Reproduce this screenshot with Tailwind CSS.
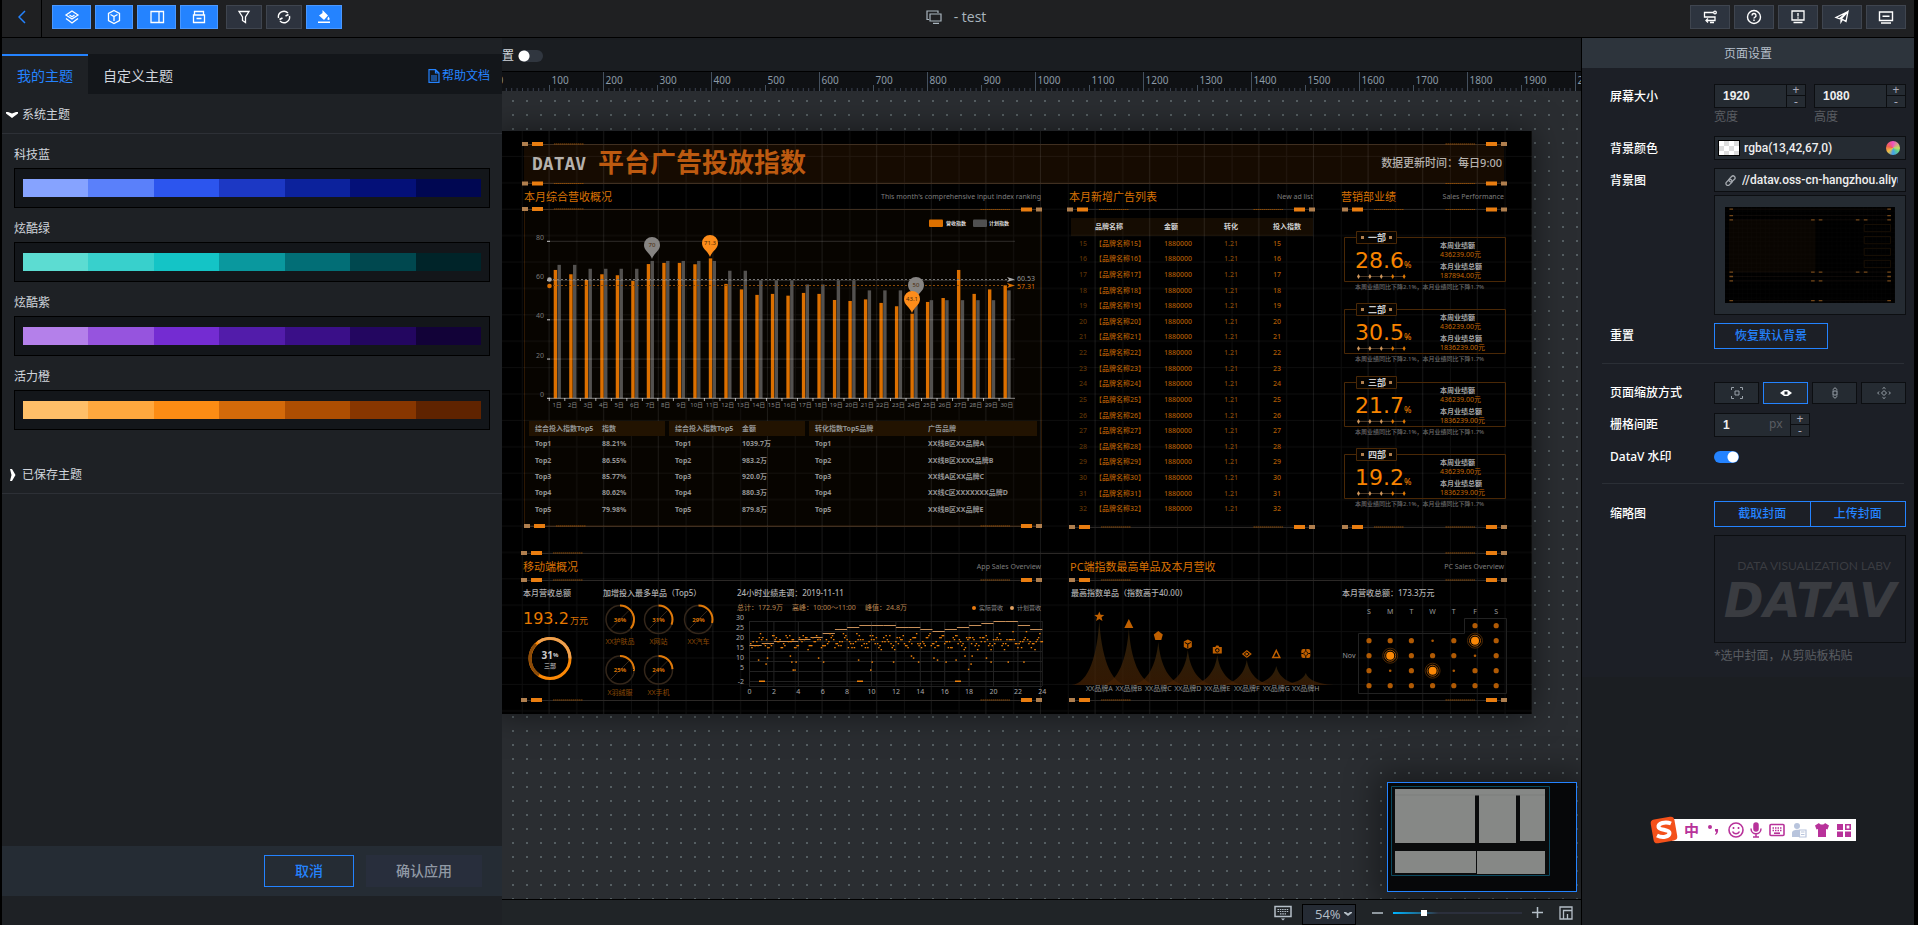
<!DOCTYPE html>
<html lang="zh-CN" class="h-full">
<head>
  <meta charset="UTF-8" />
  <meta name="viewport" content="width=device-width, initial-scale=1.0" />
  <title>DataV - test</title>
  <script src="https://cdn.jsdelivr.net/npm/@tailwindcss/browser@4"></script>
</head>
<body class="h-full bg-black font-['Noto_Sans','Noto_Sans_CJK_SC',sans-serif] text-xs text-[#d0d5dc]">
  <div class="flex h-screen flex-col overflow-hidden pr-1 pl-0.5">

    <!-- Top bar -->
    <header class="flex h-[38px] shrink-0 items-center justify-between border-b border-black bg-[#1f2022]">
      <div class="flex h-full flex-1 items-center">
        <button aria-label="返回" class="flex h-full w-10 items-center justify-center border-r border-black pb-1 text-[#2483ff]">
          <svg class="h-3.5 w-2" viewBox="0 0 8 14" fill="none" stroke="currentColor" stroke-width="1.5"><path d="M7 1 1 7l6 6" /></svg>
        </button>
        <div class="ml-2.5 flex gap-1 pb-1 text-white">
          <button aria-label="图层" class="flex h-6 w-[39px] items-center justify-center border border-[#4a98ff] bg-[#2483ff]">
            <svg class="size-4" viewBox="0 0 16 16" fill="none" stroke="currentColor" stroke-width="1.300"><path d="m8 2 6 4-6 4-6-4z" /><path d="m2 9.500 6 4.500 6-4.500M5.500 6 8 7.800 10.500 6" /></svg>
          </button>
          <button aria-label="组件" class="flex h-6 w-[38px] items-center justify-center border border-[#4a98ff] bg-[#2483ff]">
            <svg class="size-4" viewBox="0 0 16 16" fill="none" stroke="currentColor" stroke-width="1.300"><path d="m8 1.500 5.500 3v7L8 14.500l-5.500-3v-7z" /><path d="m4.500 5.500 3.500 2 3.500-2M8 7.500V12" /></svg>
          </button>
          <button aria-label="右侧面板" class="flex h-6 w-[39px] items-center justify-center border border-[#4a98ff] bg-[#2483ff]">
            <svg class="size-4" viewBox="0 0 16 16" fill="none" stroke="currentColor" stroke-width="1.300"><path d="M2 2.500h12.500v11H2zM10 2.500v11" /></svg>
          </button>
          <button aria-label="工具栏" class="flex h-6 w-[38px] items-center justify-center border border-[#4a98ff] bg-[#2483ff]">
            <svg class="size-4" viewBox="0 0 16 16" fill="none" stroke="currentColor" stroke-width="1.300"><path d="M2.500 6h11v7.500h-11zM3.500 6V2.500h9V6M5.500 9.500h5" /></svg>
          </button>
          <button aria-label="过滤器" class="ml-1 flex h-6 w-9 items-center justify-center border border-[#3f454f] bg-[#2d333e]">
            <svg class="size-4" viewBox="0 0 16 16" fill="none" stroke="currentColor" stroke-width="1.300"><path d="M3 2.500h10L9.500 8v5.500l-3-2V8z" /></svg>
          </button>
          <button aria-label="刷新" class="flex h-6 w-9 items-center justify-center border border-[#3f454f] bg-[#2d333e]">
            <svg class="size-4" viewBox="0 0 16 16" fill="none" stroke="currentColor" stroke-width="1.400"><path d="M2.500 9A5.600 5.600 0 0 1 12 4M13.500 7A5.600 5.600 0 0 1 4 12" /><path d="M12.500 5.500 9.500 7M3.500 10.500l3-1.500" /></svg>
          </button>
          <button aria-label="主题" class="flex h-6 w-9 items-center justify-center border border-[#4a98ff] bg-[#2483ff]">
            <svg class="size-4" viewBox="0 0 16 16" fill="currentColor"><path d="m6.500 1 5.500 5.500-4 4.500L3 6.500 6.500 4zM12.500 7.500c1.500 2 1.500 3.500 0 3.500s-1.500-1.500 0-3.500zM2 12.500h12V14H2z" /></svg>
          </button>
        </div>
      </div>

      <div class="flex items-center gap-3 pb-1 pl-1 text-[#a9b5be]">
        <svg class="h-3.5 w-4" viewBox="0 0 16 14" fill="none" stroke="currentColor" stroke-width="1.200"><path d="M3 9.500H1V1h11v2M4 4h11v7H4zM7 13.300h6" /></svg>
        <h1 class="font-['Open_Sans','Noto_Sans_CJK_SC',sans-serif] text-sm">- test</h1>
      </div>

      <div class="flex flex-1 justify-end gap-1 pr-2 pb-1 text-white">
        <button aria-label="数据" class="flex h-6 w-10 items-center justify-center border border-[#3f454f] bg-[#2d343f]">
          <svg class="size-4" viewBox="0 0 16 16" fill="none" stroke="currentColor" stroke-width="1.300"><path d="M11.500 3.500H2.500v4.500h3M5 8h8v3.500H5M8 13.500h4" /><circle cx="13" cy="3.500" r="1.300" /><path d="m6 9.500-2 2 2 2" /></svg>
        </button>
        <button aria-label="帮助" class="flex h-6 w-10 items-center justify-center border border-[#3f454f] bg-[#2d343f]">
          <svg class="size-4" viewBox="0 0 16 16" fill="none" stroke="currentColor" stroke-width="1.400"><circle cx="8" cy="8" r="6.500" /><path d="M6 6.500a2 2 0 1 1 2.800 1.800c-.6.3-.8.600-.8 1.200M8 10.500V12" /></svg>
        </button>
        <button aria-label="提示" class="flex h-6 w-10 items-center justify-center border border-[#3f454f] bg-[#2d343f]">
          <svg class="size-4" viewBox="0 0 16 16" fill="none" stroke="currentColor" stroke-width="1.300"><path d="M2 2h12v9H2zM3.500 13.500h9M8 4v3.500M8 8.300v1.400" /></svg>
        </button>
        <button aria-label="发布" class="flex h-6 w-10 items-center justify-center border border-[#3f454f] bg-[#2d343f]">
          <svg class="size-4" viewBox="0 0 16 16" fill="none" stroke="currentColor" stroke-width="1.300"><path d="M14 2.500 2 8.500l3.500 1.300L14 2.500l-2 10-3.500-2L7 13V10z" /></svg>
        </button>
        <button aria-label="预览" class="flex h-6 w-10 items-center justify-center border border-[#3f454f] bg-[#2d343f]">
          <svg class="size-4" viewBox="0 0 16 16" fill="none" stroke="currentColor" stroke-width="1.400"><path d="M1.500 3h13v8.500h-13zM4.500 7.300h7M3 14h10" /></svg>
        </button>
      </div>
    </header>

    <div class="flex min-h-0 flex-1">

      <!-- Theme panel -->
      <aside class="flex w-[500px] shrink-0 flex-col bg-[#1e2125] pt-4">
        <div class="flex h-10 shrink-0 items-center justify-between bg-[#13161a] pr-3">
          <div class="flex h-full text-sm">
            <button class="w-[86px] border-t-2 border-[#2483ff] bg-[#1e2125] pt-0.5 text-[#2483ff]">我的主题</button>
            <button class="w-[100px] pt-1">自定义主题</button>
          </div>
          <a href="#" class="flex items-center gap-0.5 pt-1 text-[#2483ff]">
            <svg class="h-3.5 w-3" viewBox="0 0 12 14" fill="none" stroke="currentColor" stroke-width="1.200"><path d="M7.500.700H1v12.600h10V4zM7.500.700V4H11M3 7h6M3 9h6M3 11h6" /></svg>
            帮助文档
          </a>
        </div>
        <button class="flex h-10 shrink-0 items-center gap-1 border-b border-[#2d3036] pt-0.5 pl-1">
          <svg class="h-1.5 w-3" viewBox="0 0 12 6" fill="#fff"><path d="M0 0h2l4 1.500L10 0h2v1.500L6 6 0 1.500z" /></svg>
          系统主题
        </button>
        <div id="themes" class="px-3 pt-3"></div>
        <button class="mt-3.5 flex h-[38px] shrink-0 items-center gap-1 border-b border-[#2d3036] pl-1.5">
          <svg class="h-3 w-2.5" viewBox="0 0 10 12" fill="#fff"><path d="M2 0h2l3.500 6L4 12H2l1.500-6z" /></svg>
          已保存主题
        </button>
        <div class="mt-auto mb-[29px] flex h-[50px] shrink-0 items-center justify-end gap-3 bg-[#252c34] pr-5 text-sm font-medium">
          <button class="h-8 w-[90px] border border-[#2483ff] text-[#2483ff]">取消</button>
          <button class="h-8 w-[116px] bg-[#282e3c] text-[#9099a5]">确认应用</button>
        </div>
      </aside>

      <!-- Editor -->
      <main class="flex min-w-0 flex-1 flex-col overflow-hidden">
        <div class="flex h-[34px] shrink-0 items-center gap-1 border-b border-black bg-[#1a1d21] pt-0.5">
          <label for="snap">置</label>
          <input id="snap" type="checkbox" class="h-3 w-[25px] appearance-none rounded-full bg-[#30363f] bg-[radial-gradient(circle_at_6px_6px,#fff_5px,transparent_6px)]" />
        </div>
        <svg id="ruler" class="h-[19px] w-full shrink-0 bg-[#0f1114]" font-size="10"></svg>

        <div class="relative min-h-0 flex-1 overflow-hidden bg-[#2a2d31]">
          <svg class="absolute inset-0 size-full">
            <defs><pattern id="dots" width="14" height="14" patternUnits="userSpaceOnUse"><rect x="10" y="9" width="2" height="2" fill="#555e62" /></pattern></defs>
            <rect width="100%" height="100%" fill="url(#dots)" />
          </svg>

          <!-- Artboard -->
          <div class="absolute top-10 -left-[7px] h-[583px] w-[1037px] bg-black shadow-[0_0_30px_rgba(0,0,0,0.5)]">
            <svg class="absolute inset-0 size-full" viewBox="495 131 1037 583" font-size="7" dominant-baseline="central">
              <defs>
                <pattern id="mesh" x="495" y="131" width="54.600" height="52.800" patternUnits="userSpaceOnUse">
                  <path d="M27.300 0v53M0 25.300h55M0 51.700h55" stroke="#fff" stroke-opacity=".05" fill="none" />
                  <path d="M54.100 0v53" stroke="#fff" stroke-opacity=".09" />
                </pattern>
                <g id="corner">
                  <rect y="-2" width="6" height="4" fill="#b07f4e" />
                  <rect x="10" y="-2" width="11" height="4" fill="#e97d10" />
                  <path d="M32 0h30" stroke="#8a4a06" stroke-width="1.200" stroke-dasharray="1.500 .5" />
                </g>
                <g id="cornerR"><use href="#corner" transform="scale(-1 1)" /></g>
                <linearGradient id="peak" x1="0" y1="0" x2="0" y2="1"><stop offset="0" stop-color="#3e2c0e" /><stop offset="1" stop-color="#472204" /></linearGradient>
              </defs>
              <rect x="524" y="145" width="980" height="38" fill="#160b01" />
              <path d="M524.500 210v316h517V210" fill="#070400" stroke="#2c1703" />
              <rect x="1071" y="218" width="242" height="18" fill="#150c02" />
              <rect x="495" y="131" width="1037" height="583" fill="url(#mesh)" />
              <g fill="none" stroke="#2b2826">
                <path d="M524 144.500h983M524 183.500h983M524 209.500h518M524 526.500h518" stroke="#402f20" />
                <path d="M1067 209.500h247M1342 209.500h165M1069 527.500h245M1342 527.500h165M522 553.500h985M522 580.500h520M1069 580.500h438M522 700.500h520M1069 700.500h438" />
              </g>
              <g id="corners"></g>

              <!-- Titles -->
              <g fill="#b5b1ad" font-weight="700">
                <text x="532" y="163" font-family="DejaVu Sans Mono" font-size="18">DATAV</text>
                <text x="598" y="162" font-size="26" fill="#bd5a10">平台广告投放指数</text>
                <text x="1502" y="162" font-size="11" text-anchor="end" font-weight="500">数据更新时间：每日9:00</text>
              </g>
              <g fill="#d87204" font-size="11">
                <text x="524" y="196">本月综合营收概况</text>
                <text x="1069" y="196">本月新增广告列表</text>
                <text x="1341" y="196">营销部业绩</text>
                <text x="523" y="566">移动端概况</text>
                <text x="1070" y="566">PC端指数最高单品及本月营收</text>
              </g>
              <g fill="#7e7e7e" text-anchor="end" font-size="7">
                <text x="1041" y="196">This month's comprehensive input index ranking</text>
                <text x="1313" y="196">New ad list</text>
                <text x="1504" y="196">Sales Performance</text>
                <text x="1041" y="566">App Sales Overview</text>
                <text x="1504" y="566">PC Sales Overview</text>
              </g>

              <!-- Legend -->
              <rect x="929" y="219.500" width="14" height="7.500" rx="1" fill="#dc7000" />
              <rect x="973" y="219.500" width="14" height="7.500" rx="1" fill="#505050" />
              <g fill="#ddd" font-size="5" font-weight="700"><text x="946" y="223">营收指数</text><text x="989" y="223">计划指数</text></g>
              <g id="bars"></g>
              <g id="depts"></g>

              <!-- Mobile overview -->
              <g fill="#b0b0b0" font-size="8" font-weight="500">
                <text x="523" y="592">本月营收总额</text>
                <text x="603" y="592">加增投入最多单品（Top5）</text>
                <text x="737" y="592">24小时业绩走调：2019-11-11</text>
                <text x="1071" y="592">最高指数单品（指数高于40.00）</text>
                <text x="1342" y="592">本月营收总额：173.3万元</text>
              </g>
              <text x="523" y="618" font-family="DejaVu Sans" font-size="16" fill="#e87a00">193.2</text>
              <text x="570" y="620" font-size="9" fill="#d87204">万元</text>
              <g fill="none" stroke-width="3">
                <circle cx="550" cy="658.500" r="20" stroke="#fb8806" />
                <path d="M538 642.500A20 20 0 0 1 570 658.500" stroke="#eda050" />
                <path d="M539 675A20 20 0 0 1 536 644" stroke="#8a4a08" />
              </g>
              <text x="550" y="655" text-anchor="middle" font-size="10" font-weight="700" fill="#ccc">31<tspan font-size="6">%</tspan></text>
              <text x="550" y="666" text-anchor="middle" font-size="6" font-weight="700" fill="#999">三部</text>
              <g id="rings" text-anchor="middle"></g>
              <g fill="#b98450">
                <text x="737" y="607">总计：172.9万</text>
                <text x="792" y="607">高峰：10:00～11:00</text>
                <text x="865" y="607">峰值：24.8万</text>
              </g>
              <circle cx="974" cy="608" r="2" fill="#e87a10" /><circle cx="1012" cy="608" r="2" fill="#e0a060" />
              <g fill="#8a8a8a" font-size="6"><text x="979" y="608">实际营收</text><text x="1017" y="608">计划营收</text></g>
              <g id="scatter"></g>

              <!-- PC overview -->
              <g id="peaks"></g>
              <path d="M1464.500 618.500h42V693.500h-148V633.500h106z" fill="none" stroke="#222" />
              <g id="calendar" fill="#9a9a9a" text-anchor="middle"></g>
            </svg>

            <!-- Top5 tables -->
            <div id="top5" class="absolute top-[290px] left-[34px] flex w-[508px] gap-1 text-[7px] leading-[10px] text-[#939393]"></div>

            <!-- New ad list -->
            <table class="absolute top-[87px] left-[576px] h-[299px] w-[242px] table-fixed text-[7px] leading-[10px] font-medium text-[#b05c04]">
              <thead class="text-[#d0d0d0]">
                <tr class="h-[18px] text-left">
                  <th class="w-[24px]"></th><th class="w-[69px]">品牌名称</th><th class="w-[60px]">金额</th><th class="w-[49px]">转化</th><th>投入指数</th>
                </tr>
              </thead>
              <tbody id="ads"></tbody>
            </table>
          </div>

          <!-- Minimap -->
          <div class="absolute right-1 bottom-[7px] h-[110px] w-[190px] border border-[#2483ff] bg-[#060709] p-[3px] shadow-[0_0_30px_10px_rgba(0,0,0,0.4)]">
            <svg class="h-[90px] w-[159px]" viewBox="0 0 159 90" fill="#868886">
              <path d="M.5.500h158v89H.5z" fill="#0a0b0c" stroke="#0b4a60" />
              <path d="M4 3h150v52h-25V9h-4v48H88V9h-4v48H4zM4 65h81v22H4zM86 65h68v23H86z" />
              <path d="M4 9h150" stroke="#7c7e7c" />
            </svg>
          </div>
        </div>

        <!-- Zoom bar -->
        <footer class="flex h-[26px] shrink-0 items-center justify-end border-t border-black bg-[#202427] pr-2 text-[#b5bfc8]">
          <button aria-label="快捷键"><svg class="h-4 w-[18px]" viewBox="0 0 18 16" fill="none" stroke="currentColor" stroke-width="1.500"><path d="M1 1.500h16v10H1z" /><path d="M3.500 4.500h11M3.500 6.500h11M6 8.800h6" stroke-dasharray="1.500 .8" stroke-width="1.200" /><path d="M7 13.500h4l-2 2z" fill="currentColor" stroke="none" /></svg></button>
          <div class="relative ml-2.5 h-full pt-1">
            <select aria-label="缩放" class="h-full w-[54px] appearance-none border border-black bg-[#252b34] pl-3 font-['Open_Sans',sans-serif] text-[13px]"><option>54%</option></select>
            <svg class="pointer-events-none absolute top-2.5 right-1 h-2 w-2" viewBox="0 0 8 6" fill="currentColor"><path d="M0 1h2l2 1.500L6 1h2v1L4 5 0 2z" /></svg>
          </div>
          <button aria-label="缩小" class="ml-4"><svg class="h-3 w-[11px]" viewBox="0 0 11 12"><path d="M0 6h11" stroke="currentColor" stroke-width="1.500" /></svg></button>
          <input aria-label="缩放比例" type="range" min="0" max="100" value="23" class="ml-2.5 h-1.5 w-[129px] appearance-none bg-[linear-gradient(90deg,#00b4ff,#2a4a60_30%,#2b2f3c_35%)] bg-[length:100%_2px] bg-center bg-no-repeat [&::-webkit-slider-thumb]:h-1.5 [&::-webkit-slider-thumb]:w-1.5 [&::-webkit-slider-thumb]:appearance-none [&::-webkit-slider-thumb]:bg-white" />
          <button aria-label="放大" class="ml-2.5"><svg class="size-[11px]" viewBox="0 0 11 11"><path d="M0 5.500h11M5.500 0v11" stroke="currentColor" stroke-width="1.500" /></svg></button>
          <button aria-label="缩略图" class="ml-4"><svg class="size-3.5" viewBox="0 0 14 14" fill="none" stroke="currentColor" stroke-width="1.300"><path d="M1 1h12v12H1zM4.500 13V4.500H13M8.500 13V8" /></svg></button>
        </footer>
      </main>

      <!-- Page settings -->
      <aside class="w-[333px] shrink-0 border-l border-black bg-[#1b1e22]">
        <h2 class="flex h-[30px] items-center justify-center bg-[#2d343c] pt-0.5 text-[#b5bfca]">页面设置</h2>
        <form class="bg-[#1c1f26] pt-4 pr-2 pb-3 pl-7 text-white">
          <div class="flex">
            <label for="w" class="w-[104px] font-medium leading-[26px]">屏幕大小</label>
            <div class="flex flex-1 justify-between">
              <div class="w-[92px]">
                <div class="flex h-6 border border-[#0c0e11] bg-[#252b32]">
                  <input id="w" value="1920" class="w-[72px] border-r border-[#0c0e11] pl-2 font-['Liberation_Sans'] font-bold text-[#eee]" />
                  <span class="flex flex-1 flex-col text-[#aab]"><button type="button" class="h-[11px] border-b border-[#0c0e11] leading-[10px]">+</button><button type="button" class="h-[11px] leading-[10px]">-</button></span>
                </div>
                <p class="leading-[18px] text-[#5a5d62]">宽度</p>
              </div>
              <div class="w-[92px]">
                <div class="flex h-6 border border-[#0c0e11] bg-[#252b32]">
                  <input aria-label="高度" value="1080" class="w-[72px] border-r border-[#0c0e11] pl-2 font-['Liberation_Sans'] font-bold text-[#eee]" />
                  <span class="flex flex-1 flex-col text-[#aab]"><button type="button" class="h-[11px] border-b border-[#0c0e11] leading-[10px]">+</button><button type="button" class="h-[11px] leading-[10px]">-</button></span>
                </div>
                <p class="leading-[18px] text-[#5a5d62]">高度</p>
              </div>
            </div>
          </div>

          <div class="mt-2.5 flex h-6">
            <label for="color" class="w-[104px] font-medium leading-[26px]">背景颜色</label>
            <div class="flex h-6 flex-1 items-center border border-[#0c0e11] bg-[#252b32] px-[3px]">
              <span class="h-4 w-[22px] border border-black bg-white bg-[conic-gradient(#ddd_25%,#fff_0_50%,#ddd_0_75%,#fff_0)] bg-[length:10px_10px]"></span>
              <input id="color" value="rgba(13,42,67,0)" class="w-[146px] pl-1 font-['Roboto'] font-medium text-[#eee]" />
              <span class="size-3.5 rounded-full bg-[conic-gradient(#f050c0,#c0e060_25%,#60d090_35%,#40a0f0_50%,#f0c040_65%,#f06050_80%,#f050c0)]"></span>
            </div>
          </div>

          <div class="mt-2 flex">
            <label for="bg" class="w-[104px] font-medium leading-[26px]">背景图</label>
            <div class="min-w-0 flex-1">
              <div class="flex h-6 items-center gap-1.5 border border-[#0c0e11] bg-[#252b32] pr-[7px] pl-[9px]">
                <svg class="size-3 shrink-0" viewBox="0 0 12 12" fill="none" stroke="#a5aab0" stroke-width="1.300"><rect x="-1" y="-1" width="7" height="4" rx="2" transform="translate(2.500 9.500) rotate(-45)" /><rect x="-1" y="-1" width="7" height="4" rx="2" transform="translate(5.500 6) rotate(-45)" /></svg>
                <input id="bg" value="//datav.oss-cn-hangzhou.aliyuncs.com" class="min-w-0 flex-1 font-['Roboto'] font-medium text-[#eee]" />
              </div>
              <div class="mt-[3px] flex h-[120px] items-center justify-center border border-[#0c0e11] bg-[#252b32]">
                <svg class="h-24 w-[170px] bg-black" viewBox="495 131 1037 583" preserveAspectRatio="none">
                  <rect x="520" y="209" width="527" height="317" fill="#090501" />
                  <rect x="495" y="131" width="1037" height="583" fill="url(#mesh)" />
                  <path d="M524 144h983M524 183h983M524 209h983M524 526h983M522 553h985M522 580h985M522 700h985" stroke="#2a2018" stroke-width="2" />
                  <path d="M1344 237h161v44h-161zM1344 310h161v44h-161zM1344 382h161v44h-161zM1344 455h161v44h-161z" fill="none" stroke="#1d1206" stroke-width="5" />
                  <path d="M522 144h22M522 183h22M522 209h22M522 526h22M522 553h22M522 580h22M522 700h22M1485 144h22M1485 183h22M1485 209h22M1485 526h22M1485 553h22M1485 580h22M1485 700h22M1020 209h22M1067 209h22M1020 526h22M1067 526h22M1020 580h22M1067 580h22M1020 700h22M1067 700h22M1293 209h22M1342 209h22M1293 526h22M1342 526h22" stroke="#74481a" stroke-width="8" />
                </svg>
              </div>
            </div>
          </div>

          <div class="mt-2 flex items-center">
            <span class="w-[104px] font-medium">重置</span>
            <button type="button" class="h-[26px] w-[114px] border border-[#2483ff] font-medium text-[#2483ff]">恢复默认背景</button>
          </div>

          <hr class="mt-3.5 -ml-2 mr-0.5 border-[#2b2f36]" />

          <div class="mt-[18px] flex items-center">
            <span class="w-[104px] font-medium">页面缩放方式</span>
            <div class="flex flex-1 gap-1 text-[#9aa2aa]">
              <button type="button" aria-label="全屏铺满" class="flex h-[22px] flex-1 items-center justify-center border border-[#0c0e11] bg-[#252b32]"><svg class="size-3" viewBox="0 0 12 12" fill="none" stroke="currentColor"><path d="M4 4h4v4H4zM.5 3V.500H3M9 .500h2.500V3M11.500 9v2.500H9M3 11.500H.5V9" /></svg></button>
              <button type="button" aria-label="按宽度缩放" class="flex h-[22px] flex-1 items-center justify-center border border-[#2483ff] bg-[#252b32]"><svg class="h-2 w-3" viewBox="0 0 12 8"><path d="M0 4 4 1h4l4 3-4 3H4z" fill="#fff" /><path d="M4.500 2.500h3v3h-3z" fill="#252b32" /></svg></button>
              <button type="button" aria-label="按高度缩放" class="flex h-[22px] flex-1 items-center justify-center border border-[#0c0e11] bg-[#252b32]"><svg class="h-3 w-2" viewBox="0 0 8 12" fill="none" stroke="currentColor"><path d="M2 4h4v4H2zM1.500 3 4 .700 6.500 3M1.500 9 4 11.300 6.500 9" /></svg></button>
              <button type="button" aria-label="不缩放" class="flex h-[22px] flex-1 items-center justify-center border border-[#0c0e11] bg-[#252b32]"><svg class="h-3 w-3.5" viewBox="0 0 14 12" fill="none" stroke="currentColor"><path d="m7 3.500 2.500 2.500L7 8.500 4.500 6zM5.500 1.700 7 .500l1.500 1.200M5.500 10.300 7 11.500l1.500-1.200M2 4.500.700 6 2 7.500M12 4.500 13.300 6 12 7.500" /></svg></button>
            </div>
          </div>

          <div class="mt-[9px] flex items-center">
            <label for="grid" class="w-[104px] font-medium">栅格间距</label>
            <div class="flex h-6 w-24 border border-[#0c0e11] bg-[#252b32]">
              <input id="grid" value="1" class="w-[54px] pl-2 font-['Liberation_Sans'] font-bold text-[#eee]" />
              <span class="w-[22px] border-r border-[#0c0e11] pt-0.5 text-[#5a5d62]">px</span>
              <span class="flex flex-1 flex-col text-[#aab]"><button type="button" class="h-[11px] border-b border-[#0c0e11] leading-[10px]">+</button><button type="button" class="h-[11px] leading-[10px]">-</button></span>
            </div>
          </div>

          <div class="mt-2 flex h-6 items-center">
            <label for="mark" class="w-[104px] font-medium">DataV 水印</label>
            <input id="mark" type="checkbox" checked class="h-3 w-[25px] appearance-none rounded-full bg-[#2483ff] bg-[radial-gradient(circle_at_19px_6px,#fff_5px,transparent_6px)]" />
          </div>

          <hr class="mt-3.5 -ml-2 mr-0.5 border-[#2b2f36]" />

          <div class="mt-[17px] flex">
            <span class="w-[104px] font-medium leading-[26px]">缩略图</span>
            <div class="flex-1">
              <div class="flex font-medium text-[#2483ff]">
                <button type="button" class="h-[26px] flex-1 border border-[#2483ff]">截取封面</button>
                <button type="button" class="h-[26px] flex-1 border border-l-0 border-[#2483ff]">上传封面</button>
              </div>
              <div class="mt-2 flex h-[108px] flex-col items-center border border-[#0c0e11] pt-6 text-[#3a3c41]">
                <span class="self-end pr-3.5 font-['Lato'] leading-3">DATA VISUALIZATION LABV</span>
                <span class="font-['DejaVu_Sans'] text-5xl leading-[56px] font-bold italic">DATAV</span>
              </div>
              <p class="mt-1 leading-[18px] text-[#5a5d62]">*选中封面，从剪贴板粘贴</p>
            </div>
          </div>
        </form>
      </aside>
    </div>
  </div>

  <!-- Input method bar -->
  <div class="fixed right-[62px] bottom-[81px] flex h-[28px] items-center">
    <svg class="z-10 -mr-[6px] h-7 w-7" viewBox="0 0 28 28"><rect x="2" y="2" width="24" height="24" rx="4" fill="#f4511a" transform="rotate(-10 14 14)" /><path d="M21 7.500C15 5 8 7.500 8.500 11c.5 3.500 11 2 11 6S12 22 7 19.500" fill="none" stroke="#fff" stroke-width="4" /></svg>
    <div class="flex h-[22px] w-[184px] items-center justify-between bg-white pr-1 pl-3 text-[#b8329a]">
      <span class="text-[15px] font-bold">中</span>
      <svg class="size-4" viewBox="0 0 16 16" fill="currentColor"><circle cx="5" cy="5" r="2" /><path d="M10 7h3c.5 3-.5 5-2.500 6l-.5-1c1-.600 1.300-1.300 1-2.500H10z" /></svg>
      <svg class="size-4" viewBox="0 0 16 16" fill="none" stroke="currentColor" stroke-width="1.600"><circle cx="8" cy="8" r="7" /><path d="M5.500 5v2M10.500 5v2M4.500 9.500c1.500 3 5.500 3 7 0" /></svg>
      <svg class="h-4 w-3" viewBox="0 0 12 16" fill="none" stroke="currentColor" stroke-width="1.500"><rect x="4" y="1" width="4" height="8" rx="2" fill="currentColor" /><path d="M1 6.500c0 7 10 7 10 0M6 12v3M3 15h6" /></svg>
      <svg class="h-4 w-4" viewBox="0 0 16 16" fill="none" stroke="currentColor" stroke-width="1.600"><rect x="1" y="2.500" width="14" height="11" rx="1" /><path d="M3.500 6h9M3.500 8.500h9" stroke-dasharray="1.500 1" /><path d="M5 11.200h6" /></svg>
      <svg class="h-4 w-4" viewBox="0 0 16 16" fill="#b8c4dc"><circle cx="6" cy="4" r="3" /><path d="M1 15V11c0-4 8-4 9-2H8v6z" /><path d="M8.500 8h6.500v7H8.500zM10 10h3.500M10 12.500h3.500" fill="#fff" stroke="#b8c4dc" stroke-width="1.200" /></svg>
      <svg class="h-4 w-4" viewBox="0 0 16 16" fill="currentColor"><path d="M5 1c1 2 5 2 6 0l4 2.500-1.500 4L12 7v8H4V7l-1.500.500L1 3.500z" /></svg>
      <svg class="h-4 w-4" viewBox="0 0 16 16" fill="currentColor"><path d="M1 2h6v6H1zM1 9.500h6v5.500H1zM9 9.500h6v5.500H9z" /><path d="M9.800 2.800h4.400v4.400H9.800z" fill="none" stroke="currentColor" stroke-width="1.600" /></svg>
    </div>
  </div>

  <script>
    const el = id => document.getElementById(id);

    // Theme palettes
    const themes = {
      '科技蓝': ['#86a3ff', '#5a80fa', '#2c55ee', '#1c38c4', '#0c229c', '#041078', '#000752'],
      '炫酷绿': ['#5cdcd2', '#38d0cc', '#14c4c6', '#0a989e', '#026e76', '#00484f', '#002429'],
      '炫酷紫': ['#b480ea', '#9654de', '#742cd2', '#521caa', '#3a0f88', '#230660', '#120238'],
      '活力橙': ['#ffbf68', '#ffa83e', '#fc8c14', '#d46a0a', '#ae4e02', '#873600', '#5f2300'],
    };
    el('themes').innerHTML = Object.entries(themes).map(([name, colors]) => `
      <div class="mb-3">
        <p class="h-[22px] leading-[18px]">${name}</p>
        <div class="flex h-10 items-center border border-black bg-[#13161a] px-2">
          ${colors.map(c => `<span class="h-[18px] flex-1" style="background:${c}"></span>`).join('')}
        </div>
      </div>`).join('');

    // Ruler: 54px for every 100 units
    let r = '';
    for (let i = 0; i <= 2000; i += 10) {
      const x = -6.5 + i * 0.54;
      const top = i % 200 === 0 ? 0 : i % 100 === 0 ? 13 : 16;
      r += `<path d="M${x} ${top}V19" stroke="${i % 100 ? '#3a4150' : '#44505e'}"/>`;
      if (i % 100 === 0) r += `<text x="${x + 2}" y="12" fill="#8c9aa6">${i}</text>`;
    }
    el('ruler').innerHTML = r;

    // Corner marks, left then right
    const left = [[522, 144], [522, 183.5], [522, 209], [524, 526], [1067, 209.5], [1069, 527], [1342, 209.5], [1342, 527], [521, 553], [521, 580], [1069, 580], [521, 700], [1069, 700]];
    const right = [[1507, 144], [1507, 183.5], [1042, 209.5], [1042, 526], [1315, 209.5], [1315, 527], [1507, 209.5], [1507, 527], [1507, 553], [1042, 580], [1507, 580], [1042, 700], [1507, 700]];
    el('corners').innerHTML = left.map(p => `<use href="#corner" x="${p[0]}" y="${p[1]}"/>`).join('') +
      right.map(p => `<use href="#cornerR" x="${p[0]}" y="${p[1]}"/>`).join('');

    // Daily bars
    const actual = [65.4, 63.2, 60.3, 63.2, 62.7, 59.8, 68.4, 69, 69, 68.3, 71.3, 58.3, 55.5, 52.7, 53.2, 52.3, 53.7, 53.2, 50.1, 49.6, 50.4, 48.6, 46.9, 43.1, 49.1, 51.1, 65.4, 53.2, 55.5, 57.6];
    const plan = [68, 68, 66, 66, 66, 66, 70, 70, 70, 70, 70, 65, 65, 60, 60, 60, 58, 58, 60, 60, 55, 55, 55, 50, 50, 50, 50, 50, 50, 55];
    const yv = v => 398.3 - v * 1.9625;
    let b = '';
    actual.forEach((v, i) => {
      const x = 549.3 + i * 15.51;
      b += `<rect x="${x + 4.4}" y="${yv(v)}" width="3.4" height="${v * 1.9625}" fill="#dc7000"/>
        <rect x="${x + 8.2}" y="${yv(plan[i])}" width="3.400" height="${plan[i] * 1.9625}" fill="#53514f"/>
        <path d="M${x} 398v3" stroke="#aaa"/>
        <text x="${x + 7.8}" y="405" text-anchor="middle" font-size="6" fill="#8a8a8a">${i + 1}日</text>`;
    });
    for (let v = 0; v <= 80; v += 20) {
      b += `<path d="M549 ${yv(v)}h466" stroke="#fff" stroke-opacity="${v ? .16 : .5}"/><path d="M547 ${yv(v)}h3" stroke="#ccc"/>
        <text x="544" y="${yv(v) - 4}" text-anchor="end" fill="#777">${v}</text>`;
    }
    b += `<g stroke-dasharray="2 2"><path d="M549 279.500h460" stroke="#777"/><path d="M549 285.500h460" stroke="#8a4a08"/></g>
      <circle cx="549.500" cy="279.500" r="2.300" fill="#aaa"/><circle cx="549.500" cy="286" r="2.300" fill="#dc7000"/>
      <path d="m1007 277 8 2.500-8 2.500 2-2.500z" fill="#aaa"/><path d="m1007 283 8 2.500-8 2.500 2-2.500z" fill="#dc7000"/>
      <text x="1017" y="278" fill="#999">60.53</text><text x="1017" y="286" fill="#dc7000">57.31</text>`;
    [[652, 245, '#868482', '70'], [710, 243, '#fd8c1a', '71.3'], [916, 285, '#868482', '50'], [912, 299, '#fd8c1a', '43.1']].forEach(([x, y, c, s]) => {
      b += `<path d="M${x} ${y + 14}c-2-6-8-8-8-14a8 8 0 0 1 16 0c0 6-6 8-8 14z" fill="${c}"/>
        <text x="${x}" y="${y}" font-size="6" text-anchor="middle" fill="#4a2a08">${s}</text>`;
    });
    el('bars').innerHTML = b;

    // Department cards
    el('depts').innerHTML = [['一部', '28.6', '187894.00元', 237], ['二部', '30.5', '1836239.00元', 309], ['三部', '21.7', '1836239.00元', 382], ['四部', '19.2', '1836239.00元', 454]].map(([n, v, total, y]) => `
      <path d="M1344.500 ${y + .5}h161v44h-161z" fill="none" stroke="#4a2806"/>
      <path d="M1356.500 ${y - 5.5}h40v12h-40z" fill="#060300" stroke="#4a2806"/>
      <path d="M1361 ${y - 1}h3v3h-3zM1389 ${y - 1}h3v3h-3z" fill="#b07f4e"/>
      <text x="1377" y="${y}" text-anchor="middle" font-size="9" font-weight="700" fill="#ccc">${n}</text>
      <text x="1355" y="${y + 31}" font-family="DejaVu Sans" font-size="22" dominant-baseline="auto" fill="#f88400">${v}<tspan font-size="9" font-family="Noto Sans">%</tspan></text>
      <path d="M1358 ${y + 39.5}h46" stroke="#4a3826"/>
      ${[0, 1, 2, 3, 4].map(i => `<path d="m${1358.5 + i * 11.4} ${y + 37} 1.500 2.500-1.500 2.500-1.500-2.500z" fill="${i < 3 ? '#d0975c' : '#e07800'}"/>`).join('')}
      <g fill="#a5a5a5" font-weight="700"><text x="1440" y="${y + 8}">本周业绩额</text><text x="1440" y="${y + 29}">本月业绩总额</text></g>
      <g fill="#c46804"><text x="1440" y="${y + 17}">436239.00元</text><text x="1440" y="${y + 38}">${total}</text></g>
      <text x="1355" y="${y + 50}" font-size="6" font-weight="500" fill="#6a6a6a">本周业绩同比下降2.1%，本月业绩同比下降1.7%</text>`).join('');

    // Product rings
    el('rings').innerHTML = [[620, 619.5, 36, 'XX护肤品'], [658.5, 619.5, 31, 'X网站'], [698.5, 619.5, 29, 'XX汽车'], [620, 670, 25, 'X羽绒服'], [658.5, 670, 24, 'XX手机']].map(([x, y, p, n]) => `
      <g fill="none"><circle cx="${x}" cy="${y}" r="14" stroke="#33261a" stroke-width="1.500"/><path d="M${x - 9} ${y + 9}l18-18" stroke="#33261a"/>
      <circle cx="${x}" cy="${y}" r="14" stroke="#e07a0a" stroke-width="2" pathLength="100" stroke-dasharray="${p} 100" transform="rotate(-90 ${x} ${y})"/></g>
      <text x="${x}" y="${y}" font-size="6" font-weight="700" fill="#d87204">${p}%</text>
      <text x="${x}" y="${y + 22}" fill="#8a4a06">${n}</text>`).join('');

    // 24 hour chart
    let s = '';
    [621, 631, 641, 651, 661, 671, 681, 686].forEach(y => s += `<path d="M749 ${y}.500h293" stroke="#222"/>`);
    [[30, 617], [25, 627], [20, 637], [15, 647], [10, 657], [5, 667], [-2, 681]].forEach(([v, y]) => s += `<text x="744" y="${y}" text-anchor="end" fill="#aaa">${v}</text>`);
    for (let i = 0; i <= 12; i++) {
      const x = 749.5 + i * 24.4;
      s += `<path d="M${x} 621v65" stroke="#222"/><text x="${x}" y="691" text-anchor="middle" fill="#aaa">${i * 2}</text>`;
    }
    [15, 16, 17, 17, 18, 19, 21, 23, 24, 25, 25, 25, 24, 24, 23, 22, 23, 24, 25, 26, 27, 27, 25, 23].forEach((v, i) =>
      s += `<path d="M${749.5 + i * 12.2} ${675.5 - v * 2}h12.200" stroke="#c8905a"/>`);
    for (let i = 0; i < 240; i++) {
      const x = 750 + i * 1.22;
      const y = 641 + Math.round(Math.sin(i * .55) * 2.2 + Math.sin(i * 2.3) * 1.6 + Math.cos(i * 5.1)) * 2;
      s += `<rect x="${x}" y="${y}" width="1.500" height="1.300" fill="#ee820c"/>`;
    }
    [[722, 778], [747, 772], [743, 790], [811, 766], [815, 784], [819, 808], [824, 808], [827, 784], [890, 772], [904, 784], [1002, 778], [1040, 784], [1036, 808], [1100, 784], [1150, 766], [1156, 772], [1170, 784], [1213, 772], [1223, 778], [1247, 784], [1275, 778], [1300, 766], [1320, 766], [1317, 790], [1310, 806], [1360, 772], [1373, 784], [1421, 784], [1465, 784]].forEach(([x, y]) =>
      s += `<rect x="${500 + x / 2.8}" y="${400 + y / 3}" width="1.500" height="1.500" fill="#ee820c"/>`);
    [759, 857, 955].forEach(x => s += `<rect x="${x}" y="680.500" width="6" height="1.500" fill="#ee820c"/>`);
    el('scatter').innerHTML = s;

    // Brand peaks
    const tops = [621, 629, 642, 650, 655, 660, 666, 673];
    const marks = [
      '<path d="m0-5 1.300 3.300 3.700.200-2.800 2.300 1 3.700L0 2.500l-3.200 2 1-3.700L-5-1.500l3.700-.200z"/>',
      '<path d="M0-5 4.500 4h-9z"/>',
      '<path d="m0-5 4.500 3.500L3 4h-6l-1.500-5.500z"/>',
      '<path d="m0-5 4 2v5.500l-4 2-4-2V-3z"/><path d="m-3-2 3 1.500L3-2M0-.500V4" stroke="#000" fill="none"/>',
      '<path d="M-4.500-3H-2l1-1.500h2L2-3h2.500v6.500h-9z"/><circle r="1.800" cy=".3" stroke="#000"/>',
      '<path d="M-5 0 0-4l5 4-5 4z"/><path d="M-2.500 0 0-2l2.500 2L0 2z" stroke="#000"/>',
      '<path d="M0-3.500 3.500 3.500h-7z" fill="none" stroke="#c06000" stroke-width="1.500"/>',
      '<rect x="-4.500" y="-4.500" width="9" height="9" rx="2"/><path d="M0-4.500v2M0 2.500v2M-4.500 0h2M2.500 0h2" stroke="#000"/><circle r="2" stroke="#000" stroke-width=".7"/>',
    ];
    const markY = [616.5, 624, 636, 644.5, 650, 654, 654, 653.5];
    el('peaks').innerHTML = tops.map((t, i) => {
      const x = 1099.3 + i * 29.5, h = 685 - t;
      return `<path d="M${x - 28} 685C${x - 10} 684 ${x - 2} ${685 - h * .5} ${x} ${t}C${x + 2} ${685 - h * .5} ${x + 10} 684 ${x + 28} 685z" fill="url(#peak)" fill-opacity=".7"/>
        <g transform="translate(${x} ${markY[i]})" fill="#c06000">${marks[i]}</g>
        <text x="${x}" y="688" text-anchor="middle" fill="#8f8f8f">XX品牌${'ABCDEFGH'[i]}</text>`;
    }).join('');

    // Calendar: 0 empty, 1 small, 2 regular, 3 highlighted
    const days = ['0000022', '2221232', '2322212', '2123122', '2222222'];
    let c = '<text x="1349" y="655">Nov</text>';
    [...'SMTWTFS'].forEach((d, i) => c += `<text x="${1369 + i * 21.2}" y="611">${d}</text>`);
    days.forEach((row, j) => [...row].forEach((d, i) => {
      const x = 1369 + i * 21.2, y = 625.7 + j * 15;
      if (d > 0) c += `<circle cx="${x}" cy="${y}" r="${[0, 1.3, 2.6, 4][d]}" fill="${d == 3 ? '#fb8806' : '#b05a04'}"/>`;
      if (d == 3) c += `<circle cx="${x}" cy="${y}" r="5.500" fill="none" stroke="#a05408"/><circle cx="${x}" cy="${y}" r="7.500" fill="none" stroke="#4a2806"/>`;
    }));
    el('calendar').innerHTML = c;

    // Tables
    const table = (cls, first, head, rows) => `
      <table class="h-[97px] table-fixed text-left font-bold ${cls}">
        <thead><tr class="h-[15px] bg-[#221301]"><th class="${first} pl-1.5">${head[0]}</th><th>${head[1]}</th></tr></thead>
        <tbody>${rows.map((v, i) => `<tr><td class="pl-1.5">Top${i + 1}</td><td>${v}</td></tr>`).join('')}</tbody>
      </table>`;
    el('top5').innerHTML =
      table('w-[136px]', 'w-[73px]', ['综合投入指数Top5', '指数'], ['88.21%', '86.55%', '85.77%', '80.62%', '79.98%']) +
      table('w-[136px]', 'w-[73px]', ['综合投入指数Top5', '金额'], ['1039.7万', '983.2万', '920.0万', '880.3万', '879.8万']) +
      table('w-[228px]', 'w-[119px]', ['转化指数Top5品牌', '广告品牌'], ['XX线B区XX品牌A', 'XX线B区XXXX品牌B', 'XX线A区XX品牌C', 'XX线C区XXXXXXX品牌D', 'XX线B区XX品牌E']);

    el('ads').innerHTML = Array.from({ length: 18 }, (_, i) => i + 15).map(n => `
      <tr><td class="pl-2 text-[#5e3406]">${n}</td><td>【品牌名称${n}】</td><td>1880000</td><td class="text-[#8a4a08]">1.21</td><td>${n}</td></tr>`).join('');
  </script>
</body>
</html>
